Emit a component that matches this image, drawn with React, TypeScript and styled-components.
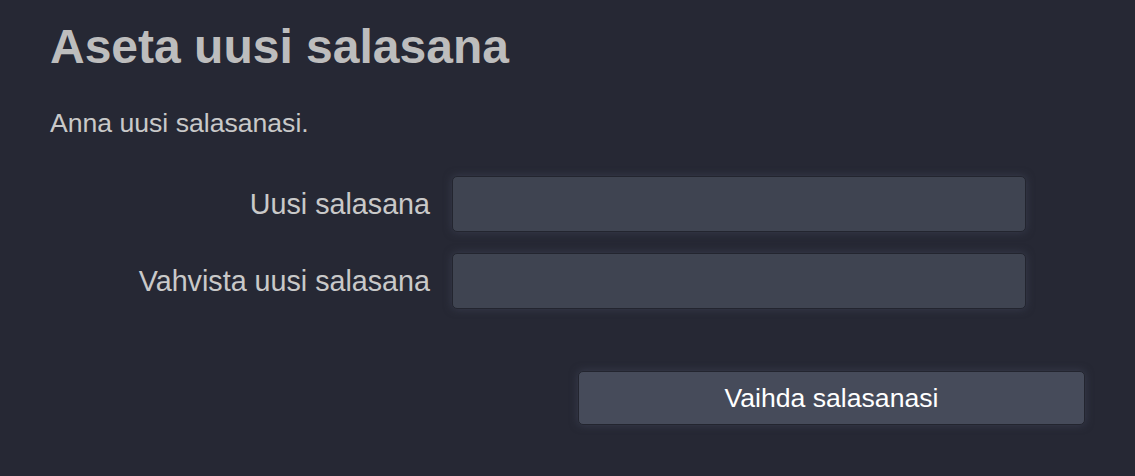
import React from 'react';
import styled, { createGlobalStyle } from 'styled-components';

const GlobalStyle = createGlobalStyle`
  html, body {
    margin: 0;
    padding: 0;
    background-color: #262834;
  }
  body {
    font-family: "Liberation Sans", Arial, Helvetica, sans-serif;
  }
`;

const Page = styled.div`
  min-height: 476px;
  padding: 19px 0 0 50px;
  box-sizing: border-box;
`;

const Title = styled.h1`
  margin: 0;
  font-size: 48px;
  line-height: 56px;
  font-weight: 700;
  color: #bdbdbd;
`;

const Intro = styled.p`
  margin: 32px 0 0;
  font-size: 26.6px;
  line-height: 32px;
  color: #c9c9c9;
`;

const Form = styled.form`
  display: flex;
  flex-direction: column;
  gap: 21px;
  margin-top: 37px;
`;

const Row = styled.div`
  display: flex;
  align-items: center;
  gap: 22px;
`;

const Label = styled.label`
  width: 380px;
  text-align: right;
  font-size: 28.7px;
  line-height: 34px;
  color: #c9c9c9;
`;

const Input = styled.input`
  width: 574px;
  height: 56px;
  box-sizing: border-box;
  border: 1.5px solid #23252f;
  border-radius: 5px;
  background-color: #3f4451;
  color: #e0e0e0;
  font-family: inherit;
  font-size: 26px;
  padding: 0 12px;
  box-shadow: 0 0 9px rgba(66, 70, 88, 0.7);
  outline: none;
`;

const Actions = styled.div`
  margin: 41px 0 0 528px;
`;

const SubmitButton = styled.button`
  width: 507px;
  height: 54px;
  box-sizing: border-box;
  border: 1.5px solid #23252f;
  border-radius: 5px;
  background-color: #464b5a;
  color: #ffffff;
  font-family: inherit;
  font-size: 26.6px;
  cursor: pointer;
  box-shadow: 0 0 9px rgba(66, 70, 88, 0.7);
`;

const App: React.FC = () => {
  return (
    <>
      <GlobalStyle />
      <Page>
        <Title>Aseta uusi salasana</Title>
        <Intro>Anna uusi salasanasi.</Intro>
        <Form onSubmit={(e) => e.preventDefault()}>
          <Row>
            <Label htmlFor="new-password">Uusi salasana</Label>
            <Input id="new-password" type="password" />
          </Row>
          <Row>
            <Label htmlFor="confirm-password">Vahvista uusi salasana</Label>
            <Input id="confirm-password" type="password" />
          </Row>
          <Actions>
            <SubmitButton type="submit">Vaihda salasanasi</SubmitButton>
          </Actions>
        </Form>
      </Page>
    </>
  );
};

export default App;
